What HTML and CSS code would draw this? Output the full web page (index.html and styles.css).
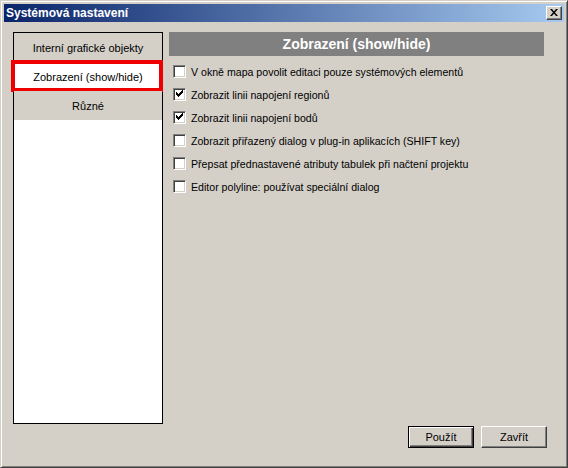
FILE: index.html
```html
<!DOCTYPE html>
<html lang="cs">
<head>
<meta charset="utf-8">
<title>Systémová nastavení</title>
<link rel="stylesheet" href="styles.css">
</head>
<body>
<div class="window">
  <div class="titlebar">
    <span class="title">Systémová nastavení</span>
    <span class="close-btn"><svg width="8" height="7" viewBox="0 0 8 7"><path d="M0 0h2l2 2.5L6 0h2L5 3.5 8 7H6L4 4.5 2 7H0l3-3.5z" fill="#000"/></svg></span>
  </div>
  <div class="content">
    <div class="nav">
      <div class="nav-item">Interní grafické objekty</div>
      <div class="nav-item selected">Zobrazení (show/hide)<span class="highlight"></span></div>
      <div class="nav-item">Různé</div>
    </div>
    <div class="panel">
      <div class="panel-header">Zobrazení (show/hide)</div>
      <div class="options">
        <label class="option"><span class="box"></span>V okně mapa povolit editaci pouze systémových elementů</label>
        <label class="option"><span class="box checked"></span>Zobrazit linii napojení regionů</label>
        <label class="option"><span class="box checked"></span>Zobrazit linii napojení bodů</label>
        <label class="option"><span class="box"></span>Zobrazit přiřazený dialog v plug-in aplikacích (SHIFT key)</label>
        <label class="option"><span class="box"></span>Přepsat přednastavené atributy tabulek při načtení projektu</label>
        <label class="option"><span class="box"></span>Editor polyline: používat speciální dialog</label>
      </div>
      <div class="buttons">
        <button class="btn default">Použít</button>
        <button class="btn">Zavřít</button>
      </div>
    </div>
  </div>
</div>
</body>
</html>
```

FILE: styles.css
```css
* { box-sizing: border-box; }
html, body { margin: 0; padding: 0; background: #d4d0c8; }
body { font-family: "Liberation Sans", Arial, sans-serif; font-size: 11px; color: #000; }

.window {
  width: 568px;
  height: 468px;
  background: #d4d0c8;
  border-top: 1px solid #d4d0c8;
  border-left: 1px solid #d4d0c8;
  border-right: 1px solid #404040;
  border-bottom: 1px solid #404040;
  box-shadow: inset 1px 1px 0 #fff, inset -1px -1px 0 #808080;
  padding: 3px;
  display: flex;
  flex-direction: column;
}

.titlebar {
  height: 18px;
  flex: none;
  background: linear-gradient(to right, #0a246a, #a6caf0);
  display: flex;
  align-items: center;
  justify-content: space-between;
  padding: 0 2px 0 2px;
}
.title { color: #fff; font-weight: bold; font-size: 12px; }
.close-btn {
  width: 16px;
  height: 14px;
  background: #d4d0c8;
  border-top: 1px solid #fff;
  border-left: 1px solid #fff;
  border-right: 1px solid #404040;
  border-bottom: 1px solid #404040;
  box-shadow: inset -1px -1px 0 #808080;
  display: flex;
  align-items: center;
  justify-content: center;
  padding-bottom: 1px;
}

.content {
  flex: 1;
  display: flex;
  gap: 6px;
  padding: 10px 17px 16px 9px;
}

.nav {
  width: 150px;
  flex: none;
  background: #fff;
  border: 1px solid #000;
  margin-bottom: 24px;
}
.nav-item {
  height: 29px;
  display: flex;
  align-items: center;
  justify-content: center;
  background: #d4d0c8;
  position: relative;
}
.nav-item.selected { background: #fff; }
.highlight {
  position: absolute;
  top: -2px;
  left: -3px;
  right: -1px;
  bottom: -1px;
  border: 4px solid #ee0000;
}

.panel {
  flex: 1;
  display: flex;
  flex-direction: column;
}
.panel-header {
  height: 24px;
  margin-right: 3px;
  background: #808080;
  color: #fff;
  font-weight: bold;
  font-size: 14px;
  display: flex;
  align-items: center;
  justify-content: center;
}
.options {
  margin-top: 4px;
  padding-left: 4px;
  display: flex;
  flex-direction: column;
  font-size: 10.6px;
}
.option {
  height: 23px;
  display: flex;
  align-items: center;
  gap: 5px;
}
.box {
  width: 13px;
  height: 13px;
  flex: none;
  background: #fff;
  border-top: 1px solid #808080;
  border-left: 1px solid #808080;
  border-right: 1px solid #fff;
  border-bottom: 1px solid #fff;
  box-shadow: inset 1px 1px 0 #404040, inset -1px -1px 0 #d4d0c8;
  position: relative;
}
.box.checked::after {
  content: "";
  position: absolute;
  left: 2px;
  top: 1px;
  width: 7px;
  height: 7px;
  background: no-repeat center/7px 7px url("data:image/svg+xml;utf8,<svg xmlns='http://www.w3.org/2000/svg' width='7' height='7' viewBox='0 0 7 7'><path d='M0 2h1v1h1v1h1V3h1V2h1V1h1V0h1v3H6v1H5v1H4v1H3v1H2V6H1V5H0z' fill='black'/></svg>");
}

.buttons {
  margin-top: auto;
  display: flex;
  justify-content: flex-end;
  gap: 7px;
}
.btn {
  width: 66px;
  height: 22px;
  font-family: "Liberation Sans", Arial, sans-serif;
  font-size: 11px;
  color: #000;
  background: #d4d0c8;
  border-top: 1px solid #fff;
  border-left: 1px solid #fff;
  border-right: 1px solid #404040;
  border-bottom: 1px solid #404040;
  box-shadow: inset -1px -1px 0 #808080;
  padding: 0;
}
.btn.default {
  border: 1px solid #000;
  box-shadow: inset 1px 1px 0 #fff, inset -1px -1px 0 #404040, inset -2px -2px 0 #808080;
}
```
